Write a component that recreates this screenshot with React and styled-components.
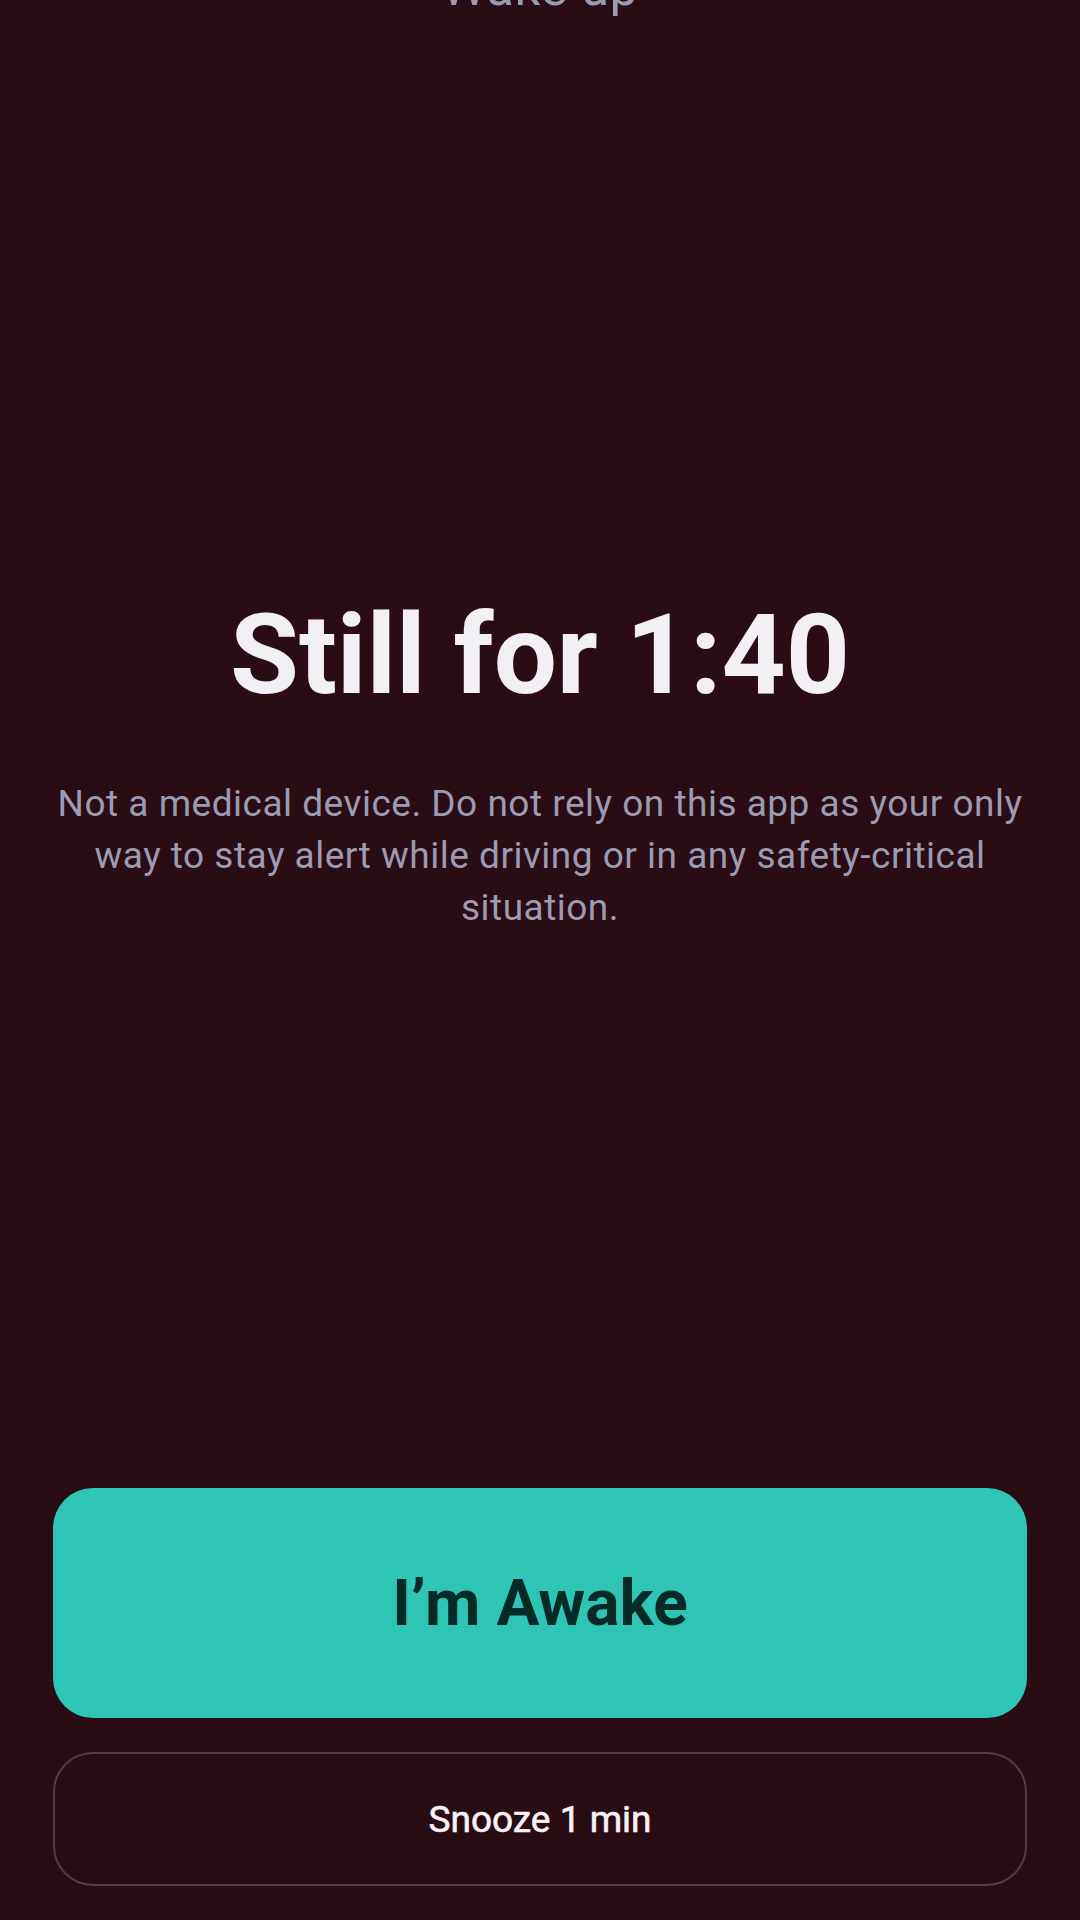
import React from 'react';
import styled, { createGlobalStyle } from 'styled-components';

const GlobalStyle = createGlobalStyle`
  html, body {
    margin: 0;
    padding: 0;
    background: #2a0c14;
  }
  body {
    font-family: Roboto, "Liberation Sans", sans-serif;
    -webkit-font-smoothing: antialiased;
  }
`;

const Screen = styled.div`
  box-sizing: border-box;
  height: 1920px;
  overflow: hidden;
  display: flex;
  flex-direction: column;
  padding: 0 53px 34px;
  background: #2a0c14;
`;

const TopLabel = styled.div`
  margin-top: -38px;
  font-size: 51px;
  line-height: 1;
  text-align: center;
  color: #9b9cb1;
  letter-spacing: 0.5px;
`;

const Centre = styled.main`
  margin-top: 575px;
  display: flex;
  flex-direction: column;
  align-items: center;
  text-align: center;
`;

const Countdown = styled.h1`
  margin: 0;
  font-size: 112px;
  line-height: 1.2;
  font-weight: 700;
  color: #f2f0f5;
`;

const Disclaimer = styled.p`
  margin: 56px 0 0;
  font-size: 37px;
  line-height: 52px;
  letter-spacing: 0.5px;
  color: #9b9cb1;
`;

const Spacer = styled.div`
  flex: 1;
`;

const Actions = styled.div`
  display: flex;
  flex-direction: column;
  gap: 34px;
`;

const Button = styled.button`
  box-sizing: border-box;
  width: 100%;
  display: flex;
  align-items: center;
  justify-content: center;
  border-radius: 40px;
  font-family: inherit;
  cursor: pointer;
  height: ${({ $primary }) => ($primary ? '230px' : '134px')};
  background: ${({ $primary }) => ($primary ? '#2ec5b6' : 'transparent')};
  border: ${({ $primary }) => ($primary ? 'none' : '2px solid #5a3a46')};
  color: ${({ $primary }) => ($primary ? '#062a25' : '#f7f2f6')};
  font-size: ${({ $primary }) => ($primary ? '64px' : '37px')};
  font-weight: ${({ $primary }) => ($primary ? 700 : 400)};
  -webkit-text-stroke: ${({ $primary }) => ($primary ? '0' : '0.6px currentColor')};
`;

export default function App() {
  return (
    <>
      <GlobalStyle />
      <Screen>
        <TopLabel>Wake up</TopLabel>
        <Centre>
          <Countdown>Still for 1:40</Countdown>
          <Disclaimer>
            Not a medical device. Do not rely on this app as your only way to
            stay alert while driving or in any safety-critical situation.
          </Disclaimer>
        </Centre>
        <Spacer />
        <Actions>
          <Button $primary>I’m Awake</Button>
          <Button>Snooze 1 min</Button>
        </Actions>
      </Screen>
    </>
  );
}
